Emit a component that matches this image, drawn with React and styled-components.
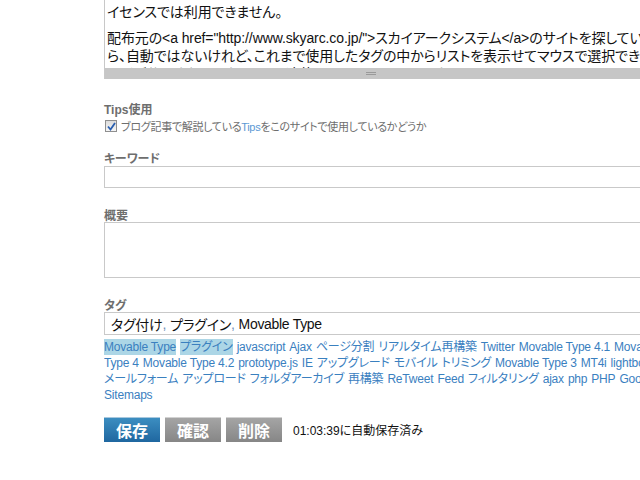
import React from "react";
import styled, { createGlobalStyle } from "styled-components";

const GlobalStyle = createGlobalStyle`
  html, body { margin: 0; padding: 0; background: #fff; overflow: hidden; }
  body {
    font-family: "Liberation Sans", "Noto Sans CJK JP", sans-serif;
    font-feature-settings: "palt";
  }
`;

const Page = styled.div`
  width: 640px;
  height: 480px;
  overflow: hidden;
  padding-left: 104px;
  box-sizing: border-box;
`;

const Column = styled.div`
  width: 640px;
  display: flex;
  flex-direction: column;
`;

const Editor = styled.div`
  border-left: 1px solid #c8c8c8;
  border-right: 1px solid #c8c8c8;
  display: flex;
  flex-direction: column;
`;

const EditorText = styled.div`
  height: 68px;
  overflow: hidden;
  padding: 3px 0 0 2px;
  box-sizing: border-box;
  font-size: 14px;
  line-height: 18px;
  letter-spacing: -0.1px;
  color: #111;
  white-space: nowrap;
`;

const EditorLine = styled.div`
  height: 18px;
  margin-bottom: ${(p) => p.$gap || 0}px;
`;

const Resizer = styled.div`
  height: 11px;
  background: #c6c6c6;
  display: flex;
  align-items: center;
  padding-left: 261px;
`;

const Grip = styled.div`
  width: 10px;
  height: 3px;
  border-top: 1px solid #9a9a9a;
  border-bottom: 1px solid #9a9a9a;
  box-sizing: border-box;
`;

const Label = styled.div`
  margin-top: ${(p) => p.$top}px;
  height: 15px;
  font-size: 12px;
  line-height: 19px;
  font-weight: bold;
  color: #6e6e6e;
`;

const CheckRow = styled.label`
  margin-top: 2px;
  display: flex;
  align-items: center;
  gap: 4px;
  height: 16px;
  padding-left: 1px;
  font-size: 11px;
  letter-spacing: -0.3px;
  color: #6e6e6e;
`;

const CheckBox = styled.span`
  width: 12px;
  height: 12px;
  box-sizing: border-box;
  border: 1px solid #8f8f8f;
  background: linear-gradient(#dcdcdc, #f6f6f6);
  display: flex;
  align-items: center;
  justify-content: center;
`;

const TipsLink = styled.span`
  color: #5b98d4;
`;

const Input = styled.div`
  margin-top: ${(p) => p.$top || 0}px;
  height: ${(p) => p.$h}px;
  border: 1px solid #c9c9c9;
  box-sizing: border-box;
  display: flex;
  align-items: center;
  padding-left: 6px;
  font-size: 14px;
  letter-spacing: -0.3px;
  color: #111;
`;

const Comma = styled.span`
  color: #6f8fb8;
  margin-right: 4px;
`;

const TagCloud = styled.div`
  margin-top: 4px;
  display: flex;
  flex-direction: column;
`;

const TagLine = styled.div`
  height: 16px;
  line-height: 16px;
  white-space: nowrap;
  overflow: hidden;
  font-size: 12px;
  letter-spacing: -0.2px;
  color: #3a80bf;
`;

const Tag = styled.span`
  margin-right: 4px;
  background: ${(p) => (p.$on ? "#acd6e6" : "transparent")};
  padding: 1px 0;
`;

const Actions = styled.div`
  margin-top: 14px;
  display: flex;
  align-items: center;
  gap: 5px;
`;

const Button = styled.button`
  width: 56px;
  height: 25px;
  border: none;
  padding: 0;
  font-family: "Liberation Sans", "Noto Sans CJK JP", sans-serif;
  font-size: 16px;
  font-weight: bold;
  color: #fff;
  background: ${(p) =>
    p.$primary
      ? "linear-gradient(#3d8fc2, #1f67a0)"
      : "linear-gradient(#a6a6a6, #868686)"};
  box-shadow: inset 0 1px ${(p) => (p.$primary ? "#a8c8de" : "#d2d2d2")};
`;

const Saved = styled.span`
  margin-left: 6px;
  font-size: 12px;
  color: #111;
`;

const tagLines = [
  [["Movable Type", true], ["プラグイン", true], ["javascript"], ["Ajax"], ["ページ分割"], ["リアルタイム再構築"], ["Twitter"], ["Movable Type 4.1"], ["Movable"]],
  [["Type 4"], ["Movable Type 4.2"], ["prototype.js"], ["IE"], ["アップグレード"], ["モバイル"], ["トリミング"], ["Movable Type 3"], ["MT4i"], ["lightbox"]],
  [["メールフォーム"], ["アップロード"], ["フォルダアーカイブ"], ["再構築"], ["ReTweet"], ["Feed"], ["フィルタリング"], ["ajax"], ["php"], ["PHP"], ["Google"]],
  [["Sitemaps"]],
];

export default function App() {
  return (
    <Page>
      <GlobalStyle />
      <Column>
        <Editor>
          <EditorText>
            <EditorLine $gap={8}>イセンスでは利用できません。</EditorLine>
            <EditorLine>
              配布元の&lt;a href="http://www.skyarc.co.jp/"&gt;スカイアークシステム&lt;/a&gt;のサイトを探していたら
            </EditorLine>
            <EditorLine>
              ら、自動ではないけれど、これまで使用したタグの中からリストを表示せてマウスで選択できるプラグイン
            </EditorLine>
            <EditorLine>ンザが公開されていたので、早速使ってみることにしました。</EditorLine>
          </EditorText>
          <Resizer>
            <Grip />
          </Resizer>
        </Editor>

        <Label $top={22}>Tips使用</Label>
        <CheckRow>
          <CheckBox>
            <svg width="9" height="9" viewBox="0 0 9 9">
              <path d="M1 4.5 L3.5 7.5 L8 1" fill="none" stroke="#2a5fb0" strokeWidth="1.8" />
            </svg>
          </CheckBox>
          <span>
            ブログ記事で解説している<TipsLink>Tips</TipsLink>をこのサイトで使用しているかどうか
          </span>
        </CheckRow>

        <Label $top={16}>キーワード</Label>
        <Input $h={22} $top={1} />

        <Label $top={19}>概要</Label>
        <Input $h={56} />

        <Label $top={19}>タグ</Label>
        <Input $h={23}>
          タグ付け<Comma>,</Comma>プラグイン<Comma>,</Comma>Movable Type
        </Input>

        <TagCloud>
          {tagLines.map((line, i) => (
            <TagLine key={i}>
              {line.map(([t, on], j) => (
                <Tag key={j} $on={on}>
                  {t}
                </Tag>
              ))}
            </TagLine>
          ))}
        </TagCloud>

        <Actions>
          <Button $primary>保存</Button>
          <Button>確認</Button>
          <Button>削除</Button>
          <Saved>01:03:39に自動保存済み</Saved>
        </Actions>
      </Column>
    </Page>
  );
}
